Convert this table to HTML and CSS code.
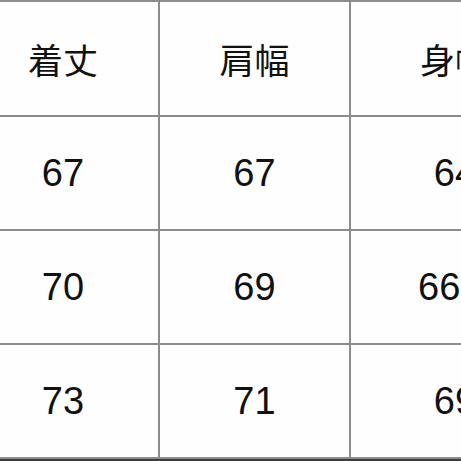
FILE: index.html
```html
<!DOCTYPE html>
<html lang="ja">
<head>
<meta charset="utf-8">
<link rel="stylesheet" href="styles.css">
</head>
<body>
<div class="frame">
  <div class="sheet">
    <div class="cell head">着丈</div>
    <div class="cell head">肩幅</div>
    <div class="cell head">身幅</div>
    <div class="cell">67</div>
    <div class="cell">67</div>
    <div class="cell">64</div>
    <div class="cell">70</div>
    <div class="cell">69</div>
    <div class="cell">66.5</div>
    <div class="cell">73</div>
    <div class="cell">71</div>
    <div class="cell">69</div>
  </div>
</div>
</body>
</html>
```
FILE: styles.css
```css
html, body {
  margin: 0;
  padding: 0;
}
body {
  width: 461px;
  height: 461px;
  overflow: hidden;
  background: #3c3c3c;
}
.frame {
  width: 461px;
  height: 459px;
  overflow: hidden;
}
.sheet {
  display: grid;
  grid-template-columns: 190px 189px 208px;
  grid-template-rows: 113px 112px 112px 112px;
  gap: 2px;
  padding: 2px;
  background: #8c8c8c;
  margin-left: -34px;
  width: max-content;
}
.cell {
  background: #fefefe;
  display: flex;
  align-items: center;
  justify-content: center;
  font-family: "Liberation Sans", Arial, sans-serif;
  font-size: 38px;
  color: #111;
}
.head {
  font-family: "Noto Sans CJK JP", "Noto Sans CJK SC", sans-serif;
  font-size: 35px;
}
```
